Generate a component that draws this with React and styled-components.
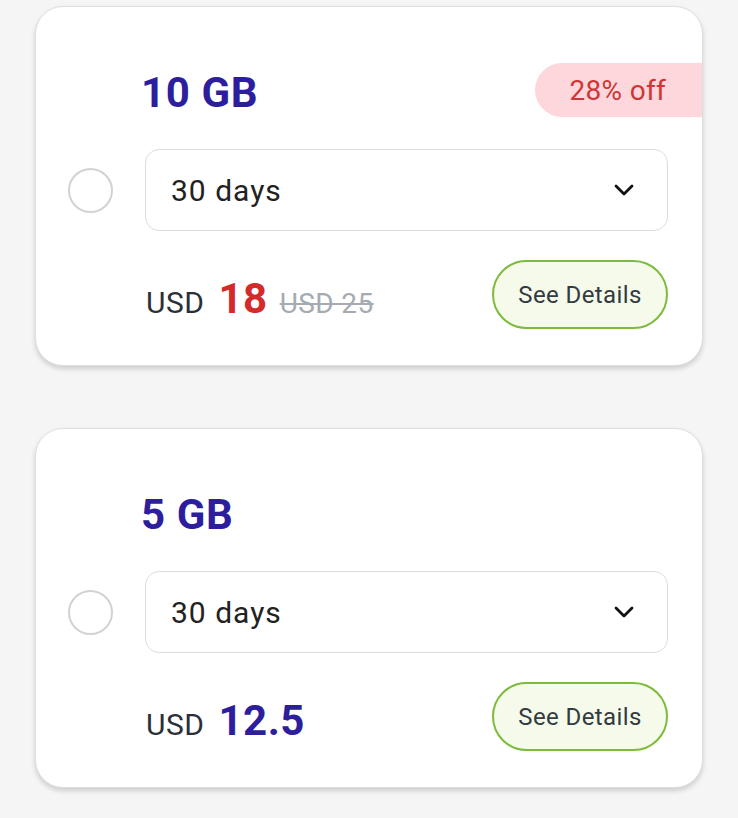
import React, { useState } from 'react';
import styled, { createGlobalStyle } from 'styled-components';

const GlobalStyle = createGlobalStyle`
  body {
    margin: 0;
    background-color: #f5f5f5;
    font-family: Roboto, "Noto Sans", Arial, sans-serif;
  }
`;

const Page = styled.div`
  display: flex;
  flex-direction: column;
  gap: 62px;
  padding: 6px 35px 30px;
`;

const Card = styled.div`
  background-color: #fff;
  border: 1.5px solid #dedede;
  border-radius: 28px;
  box-shadow: 0 3px 5px rgba(0, 0, 0, 0.16);
  padding: 56px 34px 36px 32px;
  overflow: hidden;
`;

const Header = styled.div`
  display: flex;
  justify-content: space-between;
  align-items: center;
  min-height: 54px;
  padding-left: 73px;
  margin-right: -34px;
  margin-bottom: 32px;
`;

const Title = styled.div`
  font-size: 42px;
  font-weight: 700;
  letter-spacing: 0.6px;
  color: #2d1e9e;
  padding-top: 4px;
`;

const Badge = styled.div`
  height: 54px;
  display: flex;
  align-items: center;
  padding: 0 36px 0 35px;
  border-radius: 27px 0 0 27px;
  background-color: #fdd7db;
  color: #d03535;
  font-size: 28px;
  letter-spacing: 0.3px;
`;

const SelectRow = styled.div`
  display: flex;
  align-items: center;
  gap: 32px;
  margin-bottom: 29px;
`;

const Radio = styled.div`
  width: 45px;
  height: 45px;
  box-sizing: border-box;
  border-radius: 50%;
  border: 2px solid ${(p) => (p.checked ? '#2d1e9e' : '#d2d2d2')};
  flex-shrink: 0;
  cursor: pointer;
`;

const Select = styled.div`
  flex: 1;
  height: 82px;
  box-sizing: border-box;
  display: flex;
  align-items: center;
  justify-content: space-between;
  padding: 0 33px 0 25px;
  border: 1.5px solid #dcdcdc;
  border-radius: 14px;
  font-size: 30px;
  letter-spacing: 1px;
  color: #222;
`;

const Footer = styled.div`
  display: flex;
  align-items: center;
  justify-content: space-between;
  padding-left: 78px;
`;

const Price = styled.div`
  display: flex;
  align-items: baseline;
  padding-top: 8px;
  .currency {
    font-size: 30px;
    letter-spacing: 0.5px;
    color: #2b2f38;
    margin-right: 14px;
  }
  .amount {
    font-size: 42px;
    font-weight: 700;
    letter-spacing: 0.5px;
    color: ${(p) => (p.sale ? '#d32a2a' : '#2d1e9e')};
    margin-right: 12px;
  }
  .old {
    font-size: 28px;
    letter-spacing: 0.4px;
    color: #a6abb3;
    text-decoration: line-through;
  }
`;

const DetailsButton = styled.button`
  width: 176px;
  height: 69px;
  border-radius: 35px;
  border: 2px solid #7dbb3d;
  background-color: #f5faeb;
  color: #333a40;
  font-family: inherit;
  font-size: 24px;
  letter-spacing: 0.4px;
  padding: 0;
  cursor: pointer;
`;

const Chevron = () => (
  <svg width="20" height="12" viewBox="0 0 20 12" fill="none">
    <path d="M2 2l8 8 8-8" stroke="#111" strokeWidth="2.8" strokeLinecap="round" strokeLinejoin="round" />
  </svg>
);

const plans = [
  { id: 1, size: '10 GB', discount: '28% off', price: '18', oldPrice: 'USD 25' },
  { id: 2, size: '5 GB', price: '12.5' },
];

const App = () => {
  const [selected, setSelected] = useState(null);

  return (
    <>
      <GlobalStyle />
      <Page>
        {plans.map((plan) => (
          <Card key={plan.id}>
            <Header>
              <Title>{plan.size}</Title>
              {plan.discount && <Badge>{plan.discount}</Badge>}
            </Header>
            <SelectRow>
              <Radio checked={selected === plan.id} onClick={() => setSelected(plan.id)} />
              <Select>
                <span>30 days</span>
                <Chevron />
              </Select>
            </SelectRow>
            <Footer>
              <Price sale={!!plan.oldPrice}>
                <span className="currency">USD</span>
                <span className="amount">{plan.price}</span>
                {plan.oldPrice && <span className="old">{plan.oldPrice}</span>}
              </Price>
              <DetailsButton>See Details</DetailsButton>
            </Footer>
          </Card>
        ))}
      </Page>
    </>
  );
};

export default App;
